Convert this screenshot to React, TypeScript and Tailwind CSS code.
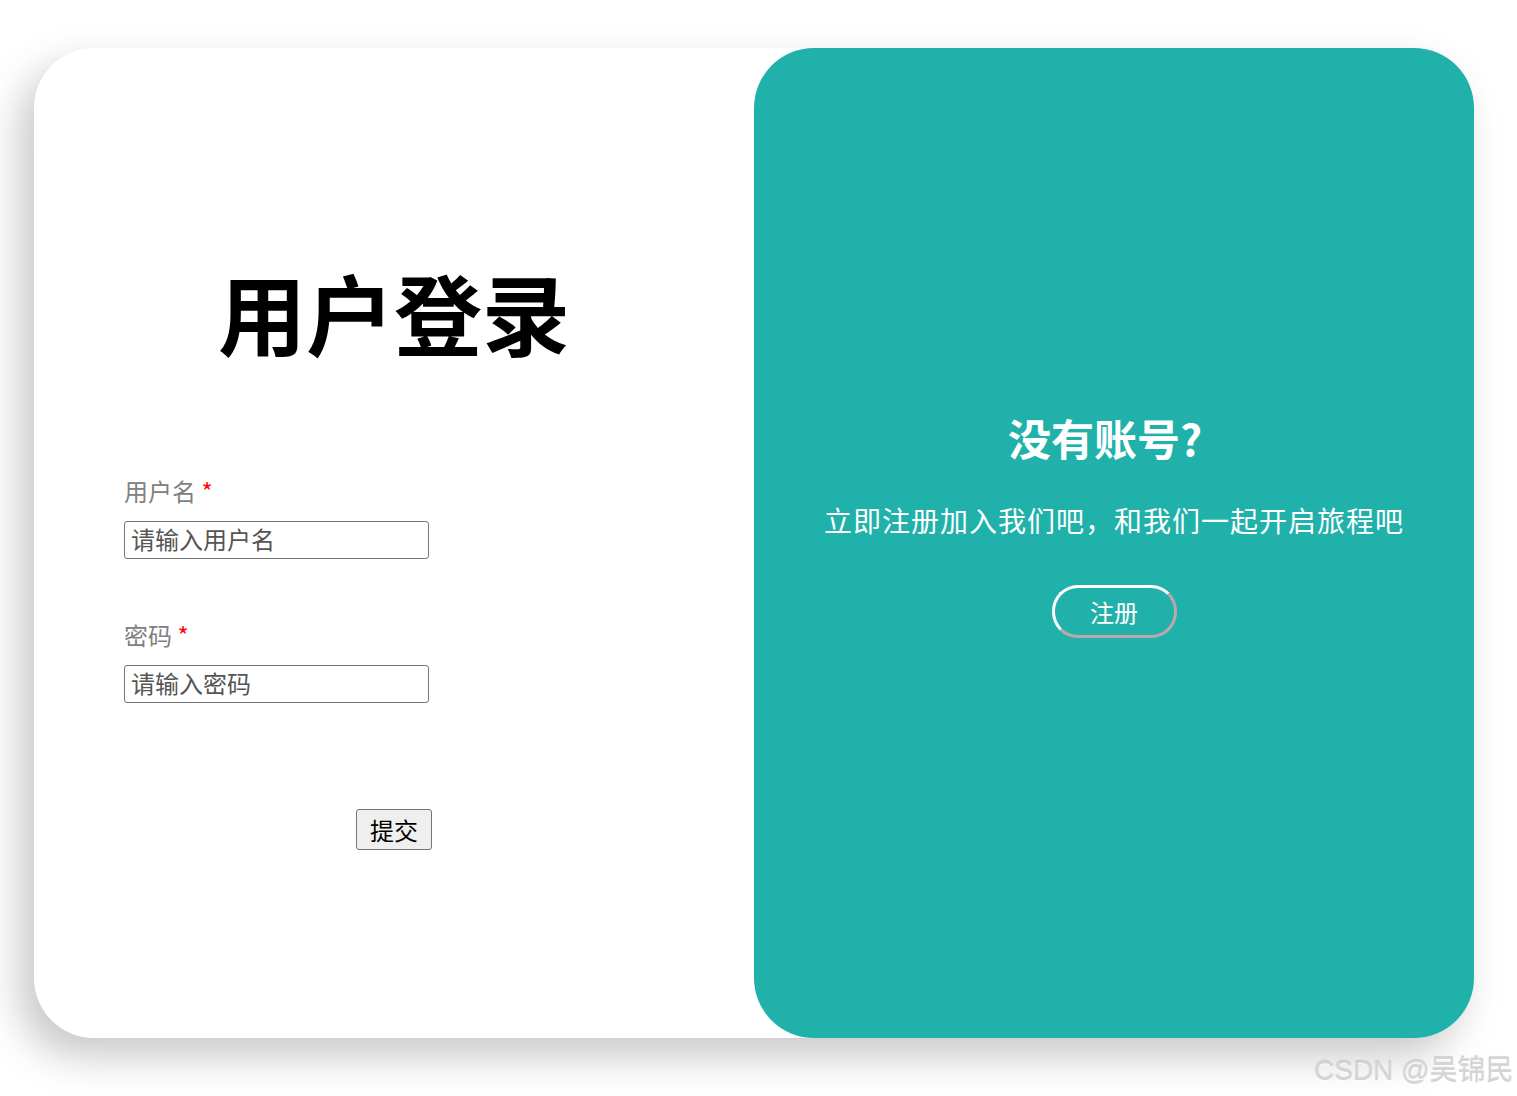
import React from "react";

const cjk = { fontFamily: '"Noto Sans CJK SC", "Noto Sans", sans-serif' };

export default function App() {
  return (
    <div className="relative w-[1517px] h-[1096px] bg-white overflow-hidden" style={cjk}>
      <div className="pt-[48px] pl-[34px]">
        <div className="flex w-[1440px] h-[990px] rounded-[60px] bg-white shadow-[-14px_18px_40px_rgba(0,0,0,0.22)]">
          <div className="w-[720px] h-full pt-[219px] pl-[90px] pr-[90px] flex flex-col">
            <h1 className="text-[88px] leading-[88px] font-bold text-black text-center">用户登录</h1>
            <div className="mt-[124px] text-[24px] leading-[24px] text-[#808080]">
              用户名 <span className="text-[#ff0000]">*</span>
            </div>
            <input
              className="mt-[18px] w-[305px] h-[38px] border border-[#767676] rounded-[3px] px-[6px] pb-[3px] text-[24px] text-[#333] placeholder:text-[#555] outline-none"
              placeholder="请输入用户名"
            />
            <div className="mt-[64px] text-[24px] leading-[24px] text-[#808080]">
              密码 <span className="text-[#ff0000]">*</span>
            </div>
            <input
              className="mt-[18px] w-[305px] h-[38px] border border-[#767676] rounded-[3px] px-[6px] pb-[3px] text-[24px] text-[#333] placeholder:text-[#555] outline-none"
              placeholder="请输入密码"
              type="text"
            />
            <div className="mt-[106px] flex justify-center">
              <button className="w-[76px] h-[41px] bg-[#efefef] border border-[#767676] rounded-[3px] text-[24px] leading-none text-black">
                提交
              </button>
            </div>
          </div>
          <div className="w-[720px] h-full rounded-[60px] bg-[#20b2aa] flex flex-col items-center pt-[367px] text-white">
            <h2 className="text-[43px] leading-[44px] font-bold pr-[18px]">没有账号?</h2>
            <p className="mt-[47px] text-[28px] leading-[28px] tracking-[1px]">立即注册加入我们吧，和我们一起开启旅程吧</p>
            <button className="mt-[51px] w-[125px] h-[53px] rounded-[26px] border-[3px] border-white border-r-[#c0a5ab] border-b-[#c0a5ab] text-[24px] leading-none text-white bg-transparent">
              注册
            </button>
          </div>
        </div>
      </div>
      <div className="absolute left-[1314px] top-[1054px] text-[28px] leading-[34px] text-[#d4d4d4] [text-shadow:0_1px_1px_rgba(255,255,255,0.9),0_-1px_1px_rgba(0,0,0,0.15)]" style={{ fontFamily: '"Liberation Sans", "Noto Sans CJK SC", sans-serif' }}>
        CSDN @吴锦民
      </div>
    </div>
  );
}
